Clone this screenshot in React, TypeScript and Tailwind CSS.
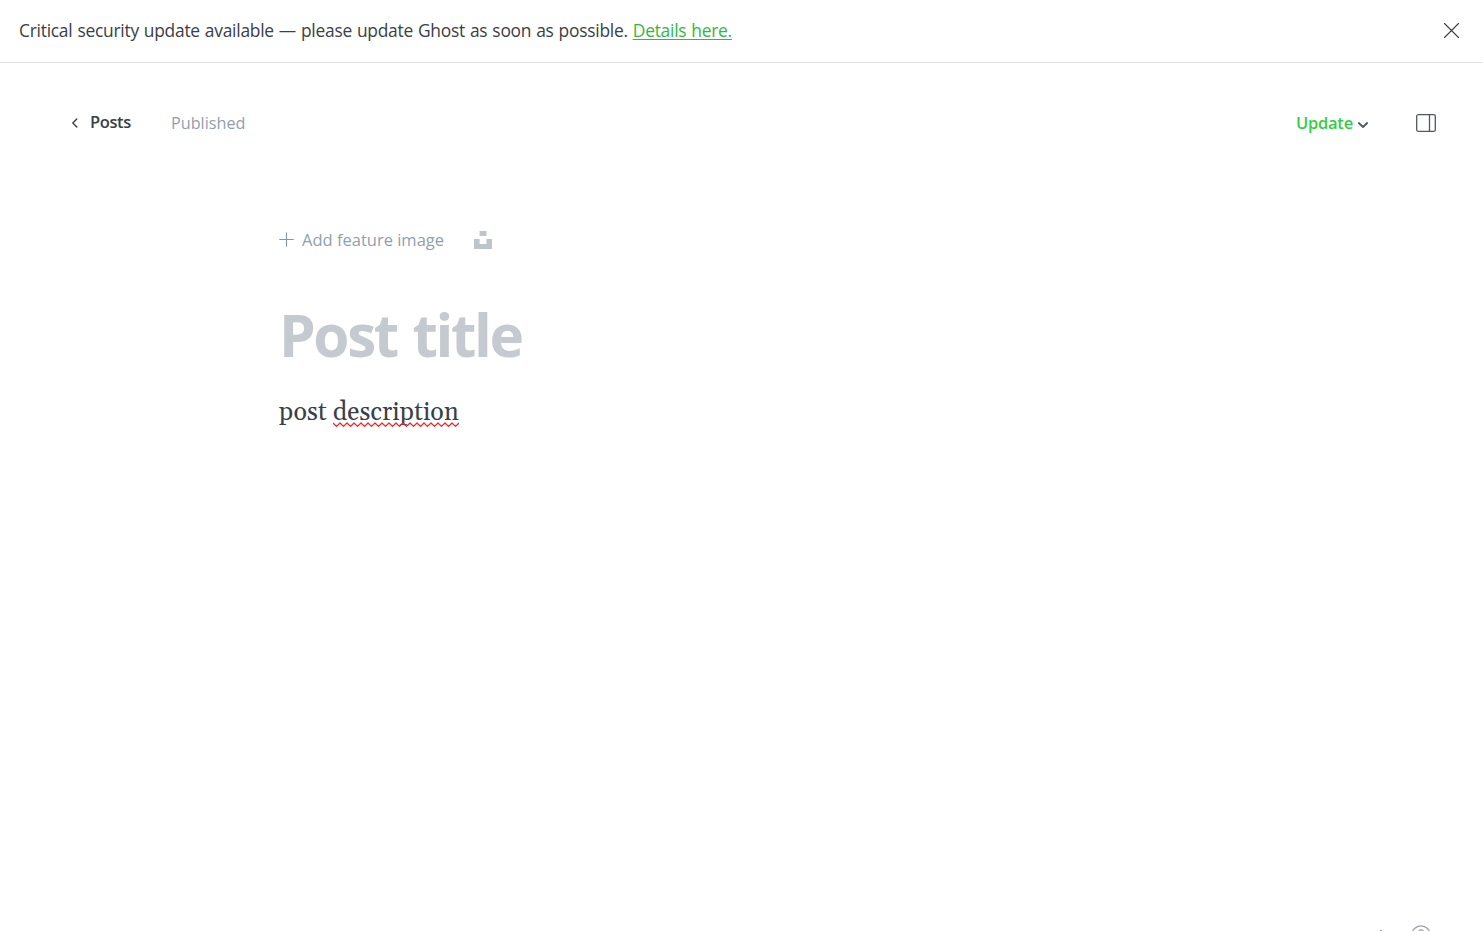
import React from "react";

const WAVE = "M0 1" + " l3.5 3.4 l3.5 -3.4".repeat(18);

function Banner() {
  return (
    <div className="flex h-[63px] shrink-0 items-center justify-between border-b border-[#dfe1e3] pb-0.5 pl-[19px] pr-[23px] text-[17.4px] leading-6 text-[#394047]">
      <p className="whitespace-nowrap tracking-[-0.25px] [word-spacing:0.7px]">
        <span>Critical security update available — please update Ghost as soon as possible. </span>
        <a className="text-[#30b93c] underline decoration-1 underline-offset-2">Details here.</a>
      </p>
      <button aria-label="Close">
        <svg width="17" height="17" viewBox="0 0 17 17" fill="none" stroke="#394047" strokeWidth="1.1" strokeLinecap="round">
          <path d="M1.5 1.5l14 14M15.5 1.5l-14 14" />
        </svg>
      </button>
    </div>
  );
}

function Header() {
  return (
    <header className="flex h-[120px] shrink-0 items-center pl-[71px] pr-[47px] text-[16px] leading-6">
      <a className="flex items-center">
        <svg className="mb-px" width="8" height="12" viewBox="0 0 8 12" fill="none" stroke="#394047" strokeWidth="1.4" strokeLinecap="round" strokeLinejoin="round">
          <path d="M5.8 2L1.8 6L5.8 10" />
        </svg>
        <span className="mb-0.5 ml-[11px] w-[81px] whitespace-nowrap text-[16.5px] font-semibold tracking-[-0.4px] text-[#394047]">Posts</span>
      </a>
      <span className="whitespace-nowrap text-[16.2px] text-[#8f9fae]">Published</span>
      <div className="ml-auto flex items-center">
        <span className="w-[61px] whitespace-nowrap text-[16.5px] font-semibold tracking-[-0.25px] text-[#30cf43]">Update</span>
        <svg className="mt-1" width="12" height="8" viewBox="0 0 12 8" fill="none" stroke="#505860" strokeWidth="1.8" strokeLinecap="round" strokeLinejoin="round">
          <path d="M1.8 2L6 6L10.2 2" />
        </svg>
        <svg className="ml-[47px]" width="20" height="18" viewBox="0 0 20 18" fill="none" stroke="#505860" strokeWidth="1.3">
          <rect x="0.7" y="0.7" width="18.6" height="16.6" rx="1.5" />
          <path d="M13.5 1v16" />
        </svg>
      </div>
    </header>
  );
}

export default function App() {
  return (
    <div className="flex h-[931px] w-full flex-col overflow-hidden bg-white font-['Open_Sans','Noto_Sans',sans-serif]">
      <Banner />
      <Header />
      <main className="flex flex-1 flex-col pl-[279px] pt-[45px]">
        <div className="flex h-6 items-center text-[16.5px] leading-6 text-[#8f9fae]">
          <svg className="mb-px" width="15" height="15" viewBox="0 0 15 15" fill="none" stroke="#8794a4" strokeWidth="1.1" strokeLinecap="round">
            <path d="M7.5 .7v13.6M.7 7.5h13.6" />
          </svg>
          <span className="ml-2 w-[172px] whitespace-nowrap">Add feature image</span>
          <svg width="18" height="18" viewBox="0 0 18 18" fill="#bdc5cb">
            <path d="M5.6 0h6.8v5H5.6zM0 8h5.6v5h6.8V8H18v10H0z" />
          </svg>
        </div>
        <h1 className="mt-[46px] h-[74px] whitespace-nowrap text-[58.5px] font-bold leading-[72px] tracking-[-2.4px] text-[#c4cad0] [word-spacing:3px]">Post title</h1>
        <p className="mt-[23px] h-9 whitespace-nowrap font-['Gelasio','Liberation_Serif',serif] text-[25px] leading-9 tracking-[0.12px] text-[#394047]">
          post{" "}
          <span className="relative inline-block">
            description
            <svg className="absolute bottom-[3px] left-0" width="126" height="6" viewBox="0 0 126 6" fill="none" stroke="#ff2020" strokeWidth="1.3" strokeLinejoin="round">
              <path d={WAVE} />
            </svg>
          </span>
        </p>
        <div className="mr-[52px] mt-auto flex h-[6px] items-start justify-end gap-[29px] overflow-hidden">
          <span className="mt-[5px] h-px w-0.5 bg-[#95a1ad]" />
          <svg className="shrink-0" width="20" height="20" viewBox="0 0 20 20" fill="none" stroke="#95a1ad" strokeWidth="1.2">
            <circle cx="10" cy="10" r="9.2" />
            <path d="M7.5 8c0-4 5-4 5-1 0 2-2.5 2-2.5 5M10 14v1.5" />
          </svg>
        </div>
      </main>
    </div>
  );
}
